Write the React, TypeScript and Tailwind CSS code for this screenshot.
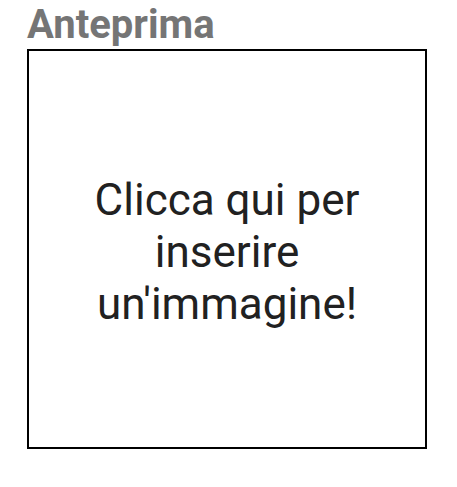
export default function App() {
	return (
		<div className="min-h-[487px] w-[457px] bg-white pt-[1px] pl-[27px]" style={{ fontFamily: 'Roboto, sans-serif' }}>
			<h1 className="text-[40px] leading-[47px] font-bold text-[#757575]">Anteprima</h1>
			<button className="mt-[1px] flex h-[400px] w-[400px] items-center justify-center border-2 border-black bg-white px-4 pt-[6px]">
				<span className="text-center text-[44px] leading-[52px] text-[#212121]">
					Clicca qui per inserire un'immagine!
				</span>
			</button>
		</div>
	);
}
